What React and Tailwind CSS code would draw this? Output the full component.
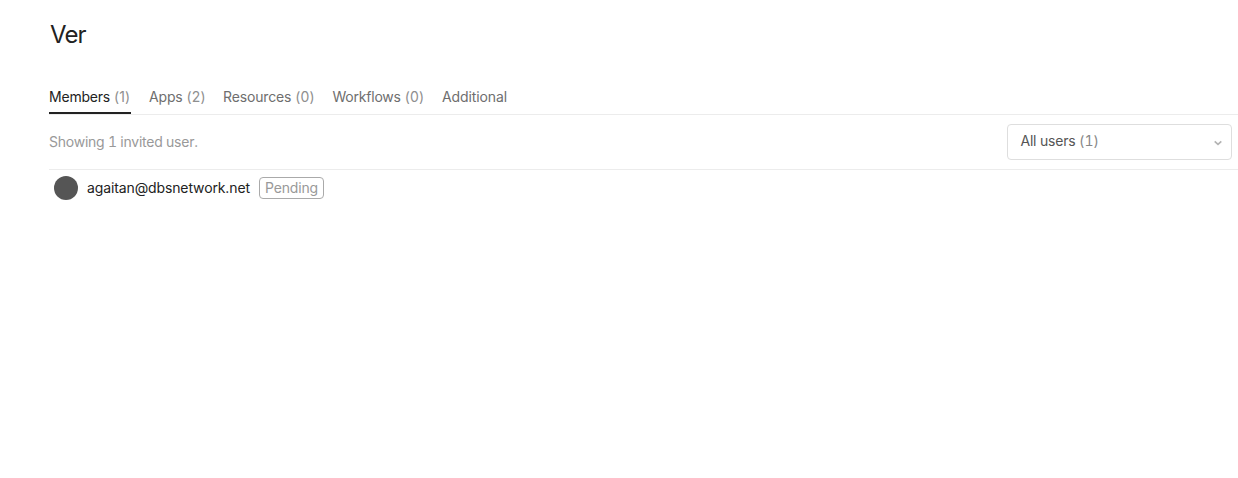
const tabs = [
  { label: 'Members', count: 1, active: true, size: 'w-[82px] tracking-[-0.21px]' },
  { label: 'Apps', count: 2, size: 'w-14 tracking-[-0.17px]' },
  { label: 'Resources', count: 0, size: 'w-[91.5px] tracking-[-0.15px]' },
  { label: 'Workflows', count: 0, size: 'w-[91.5px] tracking-[-0.22px]' },
  { label: 'Additional', size: 'w-[66px] tracking-[-0.1px]' },
];

function Tab({ label, count, active, size }) {
  const tone = active ? 'border-[#222] text-[#222]' : 'border-transparent text-[#6e6e6e]';
  return (
    <button className={`h-[29px] whitespace-nowrap border-b-2 pb-[3px] text-left ${tone} ${size}`}>
      {label}
      {count !== undefined && <span className="tracking-[0.1px] text-[#8f8f8f]"> ({count})</span>}
    </button>
  );
}

export default function App() {
  return (
    <main className="h-[478px] overflow-hidden bg-white pl-[49px] font-['Inter',sans-serif] text-sm leading-5">
      <h1 className="pt-[19px] pl-px text-[24px] leading-8 tracking-[-0.9px] text-[#222]">Ver</h1>
      <nav className="mt-[34px] flex h-[30px] gap-[18px] border-b border-[#ececec]">
        {tabs.map((tab) => (
          <Tab key={tab.label} {...tab} />
        ))}
      </nav>
      <div className="flex h-[55px] items-center justify-between border-b border-[#ececec] pr-[6px]">
        <p className="tracking-[-0.24px] tabular-nums text-[#999]">Showing 1 invited user.</p>
        <button className="flex h-9 w-[225px] items-center justify-between rounded border border-[#dedede] pr-[9px] pl-[12.5px]">
          <span className="pb-0.5 tracking-[-0.22px] text-[#555]">
            All users <span className="tabular-nums tracking-[-0.1px] text-[#888]">(1)</span>
          </span>
          <svg className="mt-[2px] size-2" viewBox="0 0 8 8" fill="none" stroke="#b3b3b3" strokeWidth="1.7">
            <path d="M.7 2.4 4 5.3 7.3 2.4" />
          </svg>
        </button>
      </div>
      <div className="flex h-9 items-center pl-[5px]">
        <span className="size-6 rounded-full bg-[#555]" />
        <span className="ml-[9px] w-[163px] tracking-[-0.12px] text-[#222]">agaitan@dbsnetwork.net</span>
        <span className="ml-[9px] flex h-[22px] w-[65px] items-center justify-center rounded border border-[#aaa] tracking-[-0.15px] text-[#999]">Pending</span>
      </div>
    </main>
  );
}
